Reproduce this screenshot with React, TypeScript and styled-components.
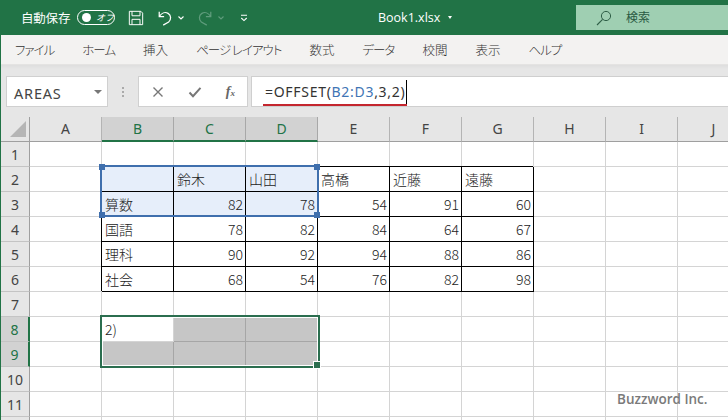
import styled, { createGlobalStyle } from "styled-components";

const GREEN = "#217346";
const COLUMNS = ["A", "B", "C", "D", "E", "F", "G", "H", "I", "J"];
const TABS = ["ファイル", "ホーム", "挿入", "ページ レイアウト", "数式", "データ", "校閲", "表示", "ヘルプ"];
const ROW_COUNT = 12;
const LAST_LABELLED_ROW = 11;

const CELLS: Record<string, string> = {
  C2: "鈴木", D2: "山田", E2: "高橋", F2: "近藤", G2: "遠藤",
  B3: "算数", C3: "82", D3: "78", E3: "54", F3: "91", G3: "60",
  B4: "国語", C4: "78", D4: "82", E4: "84", F4: "64", G4: "67",
  B5: "理科", C5: "90", D5: "92", E5: "94", F5: "88", G5: "86",
  B6: "社会", C6: "68", D6: "54", E6: "76", F6: "82", G6: "98",
  B8: "2)",
};

const isSelectedCol = (col: string) => col === "B" || col === "C" || col === "D";
const isBoxed = (col: string, row: number) => "BCDEFG".includes(col) && row >= 2 && row <= 6;
const isSource = (col: string, row: number) => isSelectedCol(col) && (row === 2 || row === 3);
const isSpill = (col: string, row: number) =>
  isSelectedCol(col) && (row === 8 || row === 9) && !(col === "B" && row === 8);

export default function App() {
  return (
    <Window>
      <GlobalStyle />
      <TitleBar>
        <AutoSave>自動保存</AutoSave>
        <Toggle>
          <ToggleDot />
          <ToggleLabel>オフ</ToggleLabel>
        </Toggle>
        <QuickIcon width="16" height="16" viewBox="0 0 18 18" $left={13}>
          <path d="M1.5 1.5h13l2 2v13h-15z M4.5 1.5v5h9v-5 M4.5 16.5v-6h9v6" fill="none" stroke="#fff" strokeWidth="1.1" />
        </QuickIcon>
        <QuickIcon width="16" height="16" viewBox="0 0 18 18" $left={13}>
          <path d="M2.5 2v5.5H8 M2.7 7.3C5 3.5 9 1.8 12.5 3.8c3.6 2 3.6 7 .6 9.6L7 17" fill="none" stroke="#fff" strokeWidth="1.4" />
        </QuickIcon>
        <QuickIcon width="8" height="6" viewBox="0 0 8 6" $left={4}>
          <path d="M1.5 1.5 4 4l2.5-2.5" fill="none" stroke="#fff" strokeWidth="1.1" />
        </QuickIcon>
        <QuickIcon width="16" height="16" viewBox="0 0 18 18" $left={12}>
          <path d="M15.5 2v5.5H10 M15.3 7.3C13 3.5 9 1.8 5.5 3.8c-3.6 2-3.6 7-.6 9.6L11 17" fill="none" stroke="#5f9c7c" strokeWidth="1.4" />
        </QuickIcon>
        <QuickIcon width="8" height="6" viewBox="0 0 8 6" $left={4}>
          <path d="M1.5 1.5 4 4l2.5-2.5" fill="none" stroke="#5f9c7c" strokeWidth="1.1" />
        </QuickIcon>
        <QuickIcon width="8" height="8" viewBox="0 0 8 8" $left={15}>
          <path d="M1 1.2h6 M1.3 4 4 6.6 6.7 4" fill="none" stroke="#fff" strokeWidth="1.1" />
        </QuickIcon>
        <FileName>Book1.xlsx</FileName>
        <FileCaret />
        <SearchBox>
          <svg width="16" height="16" viewBox="0 0 16 16">
            <circle cx="10" cy="6" r="4.6" fill="none" stroke="#2f5f47" strokeWidth="1" />
            <path d="M6.6 9.3 1 15" fill="none" stroke="#2f5f47" strokeWidth="1.1" />
          </svg>
          <SearchText>検索</SearchText>
        </SearchBox>
      </TitleBar>

      <RibbonTabs>
        {TABS.map((tab) => (
          <RibbonTab key={tab} $kana={/[ァ-ヶー]/.test(tab)}>
            {tab}
          </RibbonTab>
        ))}
      </RibbonTabs>

      <FormulaArea>
        <NameBox>
          <NameText>AREAS</NameText>
          <NameCaret />
        </NameBox>
        <GripDots>
          <i />
          <i />
          <i />
        </GripDots>
        <ActionBox>
          <svg width="12" height="12" viewBox="0 0 12 12">
            <path d="M1.5 1.5l9 9M10.5 1.5l-9 9" stroke="#777" strokeWidth="1.4" fill="none" />
          </svg>
          <svg width="14" height="12" viewBox="0 0 14 12">
            <path d="M1.5 6.5 5 10.2 12.5 1.8" stroke="#777" strokeWidth="2" fill="none" />
          </svg>
          <FxLabel>
            f<sub>x</sub>
          </FxLabel>
        </ActionBox>
        <FormulaBox>
          <FormulaText>
            =OFFSET(<RangeRef>B2:D3</RangeRef>,3,2)
            <TextCaret />
          </FormulaText>
          <RedUnderline />
        </FormulaBox>
      </FormulaArea>

      <Sheet>
        <CornerCell>
          <svg width="18" height="18" viewBox="0 0 18 18">
            <path d="M17 1v16H1z" fill="#b5b5b5" />
          </svg>
        </CornerCell>
        {COLUMNS.map((col) => (
          <ColHeader key={col} $selected={isSelectedCol(col)}>
            {col}
          </ColHeader>
        ))}
        {Array.from({ length: ROW_COUNT }, (_, i) => i + 1).map((row) => (
          <Row key={row} row={row} />
        ))}
        <SourceRange>
          <Handle $x="left" $y="top" />
          <Handle $x="right" $y="top" />
          <Handle $x="left" $y="bottom" />
          <Handle $x="right" $y="bottom" />
        </SourceRange>
        <SpillRange>
          <FillHandle />
        </SpillRange>
        <Watermark>Buzzword Inc.</Watermark>
      </Sheet>
    </Window>
  );
}

function Row({ row }: { row: number }) {
  return (
    <>
      <RowHeader $selected={row === 8 || row === 9}>{row <= LAST_LABELLED_ROW ? row : null}</RowHeader>
      {COLUMNS.map((col) => {
        const value = CELLS[`${col}${row}`];
        return (
          <Cell
            key={col}
            $boxed={isBoxed(col, row)}
            $source={isSource(col, row)}
            $spill={isSpill(col, row)}
            $number={value !== undefined && /^\d+$/.test(value)}
          >
            {value}
          </Cell>
        );
      })}
    </>
  );
}

const GlobalStyle = createGlobalStyle`
  html, body {
    margin: 0;
    padding: 0;
    background: #fff;
  }
  * {
    box-sizing: border-box;
  }
`;

const Window = styled.div`
  width: 728px;
  height: 420px;
  overflow: hidden;
  display: flex;
  flex-direction: column;
  border-left: 1px solid ${GREEN};
  font-family: "Noto Sans CJK JP", "Noto Sans", sans-serif;
  background: #fff;
`;

const TitleBar = styled.header`
  position: relative;
  height: 35px;
  flex: none;
  display: flex;
  align-items: center;
  padding-left: 21px;
  margin-left: -1px;
  background: ${GREEN};
  color: #fff;
`;

const AutoSave = styled.span`
  font-size: 12.5px;
  letter-spacing: -0.2px;
  width: 49px;
  white-space: nowrap;
`;

const Toggle = styled.div`
  margin-left: 7px;
  width: 38px;
  height: 15px;
  border: 1px solid #fff;
  border-radius: 8px;
  display: flex;
  align-items: center;
  padding-left: 4px;
`;

const ToggleDot = styled.span`
  width: 9px;
  height: 9px;
  border-radius: 50%;
  background: #fff;
`;

const ToggleLabel = styled.span`
  margin-left: 5px;
  font-size: 9px;
  font-style: italic;
  line-height: 1;
  white-space: nowrap;
`;

const QuickIcon = styled.svg<{ $left: number }>`
  flex: none;
  margin-left: ${(p) => p.$left}px;
`;

const FileName = styled.span`
  margin-left: 130px;
  font-family: "Open Sans", "Noto Sans", sans-serif;
  font-size: 12.5px;
  width: 64px;
  white-space: nowrap;
`;

const FileCaret = styled.span`
  margin-left: 6px;
  border-left: 2.5px solid transparent;
  border-right: 2.5px solid transparent;
  border-top: 3px solid #fff;
`;

const SearchBox = styled.div`
  position: absolute;
  left: 576px;
  top: 5px;
  width: 152px;
  height: 25px;
  display: flex;
  align-items: center;
  padding-left: 20px;
  background: #9fcfb2;
  color: #2a5a42;
`;

const SearchText = styled.span`
  margin-left: 14px;
  margin-top: -2px;
  font-size: 12px;
`;

const RibbonTabs = styled.nav`
  height: 30px;
  flex: none;
  display: flex;
  align-items: center;
  gap: 28px;
  padding-left: 14px;
  background: #f3f2f1;
  border-bottom: 1px solid #e4e3e2;
`;

const RibbonTab = styled.span<{ $kana: boolean }>`
  font-size: 12.5px;
  font-weight: 300;
  font-feature-settings: "palt";
  letter-spacing: ${(p) => (p.$kana ? "-1px" : "0")};
  color: #333;
  white-space: nowrap;
`;

const FormulaArea = styled.section`
  height: 52px;
  flex: none;
  display: flex;
  align-items: flex-start;
  padding: 11px 0 0 5px;
  background: linear-gradient(#dedede, #e6e6e6 4px);
`;

const NameBox = styled.div`
  width: 102px;
  height: 31px;
  display: flex;
  align-items: center;
  justify-content: space-between;
  padding: 2px 5px 0 7px;
  background: #fff;
  border: 1px solid #d0d0d0;
`;

const NameText = styled.span`
  font-family: "Noto Sans", sans-serif;
  font-size: 14.5px;
  letter-spacing: 0.8px;
  color: #444;
`;

const NameCaret = styled.span`
  margin-top: -2px;
  border-left: 4px solid transparent;
  border-right: 4px solid transparent;
  border-top: 4px solid #777;
`;

const GripDots = styled.div`
  width: 30px;
  height: 31px;
  display: flex;
  flex-direction: column;
  align-items: center;
  justify-content: center;
  gap: 2px;

  i {
    width: 2px;
    height: 2px;
    background: #aaa;
  }
`;

const ActionBox = styled.div`
  width: 110px;
  height: 31px;
  display: flex;
  align-items: center;
  justify-content: space-between;
  padding: 0 12px 0 13px;
  background: #fff;
  border: 1px solid #d0d0d0;
`;

const FxLabel = styled.span`
  font-family: "Liberation Serif", serif;
  font-style: italic;
  font-weight: 700;
  font-size: 14px;
  color: #666;

  sub {
    font-size: 9px;
    vertical-align: baseline;
  }
`;

const FormulaBox = styled.div`
  position: relative;
  margin-left: 3px;
  flex: 1;
  height: 31px;
  padding: 0 0 0 13px;
  display: flex;
  align-items: center;
  background: #fff;
  border: 1px solid #cfcfcf;
  border-right: 0;
`;

const FormulaText = styled.div`
  display: flex;
  align-items: center;
  font-family: "Noto Sans", sans-serif;
  font-size: 14px;
  letter-spacing: 0.7px;
  color: #333;
  white-space: pre;
`;

const RangeRef = styled.span`
  color: #3f75b5;
`;

const TextCaret = styled.span`
  width: 1px;
  height: 24px;
  margin-left: 1px;
  background: #000;
`;

const RedUnderline = styled.span`
  position: absolute;
  left: 11px;
  bottom: 0;
  width: 144px;
  height: 2px;
  background: #c4262e;
`;

const Sheet = styled.section`
  position: relative;
  flex: 1;
  display: grid;
  grid-template-columns: 29px repeat(10, 72px);
  grid-auto-rows: 25px;
  overflow: hidden;
`;

const HeaderBase = styled.div`
  display: flex;
  align-items: center;
  justify-content: center;
  font-family: "Noto Sans", sans-serif;
  font-size: 14px;
  background: #e6e6e6;
  color: #444;
`;

const CornerCell = styled(HeaderBase)`
  justify-content: flex-start;
  padding-left: 8px;
  border-right: 1px solid #9f9f9f;
  border-bottom: 1px solid #9f9f9f;
`;

const ColHeader = styled(HeaderBase)<{ $selected: boolean }>`
  padding-bottom: 1px;
  border-right: 1px solid ${(p) => (p.$selected ? "#a8a8a8" : "#b4b4b4")};
  border-bottom: ${(p) => (p.$selected ? `2px solid ${GREEN}` : "1px solid #9f9f9f")};
  background: ${(p) => (p.$selected ? "#d2d2d2" : "#e6e6e6")};
  color: ${(p) => (p.$selected ? GREEN : "#444")};
`;

const RowHeader = styled(HeaderBase)<{ $selected: boolean }>`
  border-bottom: 1px solid #c4c4c4;
  border-right: ${(p) => (p.$selected ? `2px solid ${GREEN}` : "1px solid #9f9f9f")};
  background: ${(p) => (p.$selected ? "#d2d2d2" : "#e6e6e6")};
  color: ${(p) => (p.$selected ? GREEN : "#444")};
`;

const Cell = styled.div<{ $boxed: boolean; $source: boolean; $spill: boolean; $number: boolean }>`
  display: flex;
  align-items: center;
  justify-content: ${(p) => (p.$number ? "flex-end" : "flex-start")};
  padding: 0 2px 0 3px;
  font-size: 14px;
  font-weight: 300;
  color: #222;
  white-space: nowrap;
  border-right: 1px solid ${(p) => (p.$boxed ? "#000" : p.$spill ? "#a6a6a6" : "#d4d4d4")};
  border-bottom: 1px solid ${(p) => (p.$boxed ? "#000" : p.$spill ? "#a6a6a6" : "#d4d4d4")};
  background: ${(p) => (p.$source ? "#e6eefa" : p.$spill ? "#c6c6c6" : "transparent")};
  box-shadow: ${(p) => (p.$boxed ? "-1px -1px 0 0 #000" : "none")};
`;

const SourceRange = styled.div`
  position: absolute;
  left: 99px;
  top: 48px;
  width: 219px;
  height: 52px;
  border: 2px solid #3f6fad;
`;

const Handle = styled.span<{ $x: "left" | "right"; $y: "top" | "bottom" }>`
  position: absolute;
  ${(p) => p.$x}: -3px;
  ${(p) => p.$y}: -3px;
  width: 6px;
  height: 6px;
  background: #3f6fad;
`;

const SpillRange = styled.div`
  position: absolute;
  left: 99px;
  top: 198px;
  width: 220px;
  height: 53px;
  border: 2px solid #2b6e4f;
  box-shadow: inset 0 0 0 1px #fff;
`;

const FillHandle = styled.span`
  position: absolute;
  right: -2px;
  bottom: -2px;
  width: 6px;
  height: 6px;
  background: #2b6e4f;
  outline: 1px solid #fff;
`;

const Watermark = styled.div`
  position: absolute;
  left: 616px;
  top: 273px;
  font-family: "Open Sans", "Noto Sans", sans-serif;
  font-size: 13.5px;
  font-weight: 600;
  color: #7a7a7a;
  white-space: nowrap;
`;
